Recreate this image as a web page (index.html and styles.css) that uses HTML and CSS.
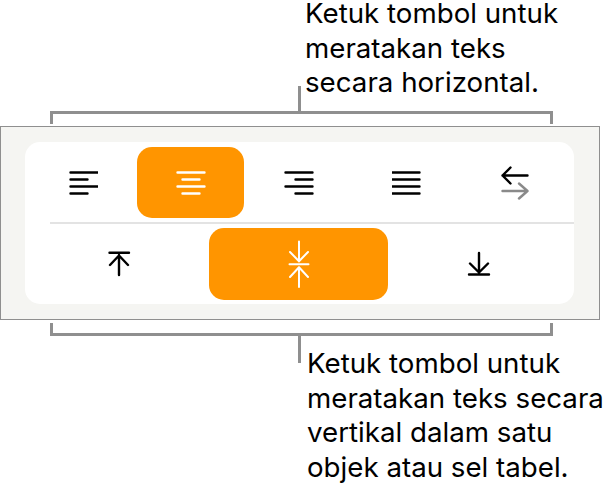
FILE: index.html
```html
<!DOCTYPE html>
<html lang="id">
<head>
<meta charset="utf-8">
<title>Perataan teks</title>
<link rel="stylesheet" href="styles.css">
</head>
<body>
<p class="note note-top">Ketuk tombol untuk<br>meratakan teks<br>secara horizontal.</p>
<div class="bracket bracket-top"></div>
<section class="panel">
  <div class="card">
    <div class="row row-h">
      <button class="btn"><svg width="30" height="24" viewBox="0 0 30 24"><path class="ic" d="M2.500 1.500H29.500M2.500 8.500H19.500M2.500 15.500H29.500M2.500 22.500H19.500"/></svg></button>
      <button class="btn on"><svg width="30" height="24" viewBox="0 0 30 24"><path class="ic" d="M1.500 1.500H28.500M6.500 8.500H23.500M1.500 15.500H28.500M6.500 22.500H23.500"/></svg></button>
      <button class="btn"><svg width="30" height="24" viewBox="0 0 30 24"><path class="ic" d="M1.500 1.500H28.500M11.500 8.500H28.500M1.500 15.500H28.500M11.500 22.500H28.500"/></svg></button>
      <button class="btn"><svg width="30" height="24" viewBox="0 0 30 24"><path class="ic" d="M0.500 1.500H27.500M0.500 8.500H27.500M0.500 15.500H27.500M0.500 22.500H27.500"/></svg></button>
      <button class="btn"><svg width="30" height="36" viewBox="0 0 30 36"><path class="ic" d="M27.500 10.500H2.500M10.500 2.500L2.500 10.500L10.500 18.500"/><path class="ic gray" d="M2.500 26H27.500M19 18.500L27.500 26L19 33.500"/></svg></button>
    </div>
    <div class="row row-v">
      <button class="btn nudge-r"><svg width="24" height="26" viewBox="0 0 24 26"><path class="ic" d="M2.500 1.700H22M12 24V4M3 14L12 4.500L21 14"/></svg></button>
      <button class="btn on"><svg width="24" height="48" viewBox="0 0 24 48"><path class="ic thin" d="M2.500 24.300H21.500M12 1.500V21.500M3 12L12 21.300L21 12M12 47V27.300M3 37L12 27.300L21 37"/></svg></button>
      <button class="btn nudge-l"><svg width="24" height="26" viewBox="0 0 24 26"><path class="ic" d="M2 23.500H22M12 2V21.500M3 12.500L12 21.500L21 12.500"/></svg></button>
    </div>
  </div>
</section>
<div class="bracket bracket-bottom"></div>
<p class="note note-bottom">Ketuk tombol untuk<br>meratakan teks secara<br>vertikal dalam satu<br>objek atau sel tabel.</p>
</body>
</html>
```
FILE: styles.css
```css
* { box-sizing: border-box; }
html, body { margin: 0; padding: 0; }
body {
  display: flow-root;
  width: 611px;
  height: 494px;
  overflow: hidden;
  background: #fff;
  color: #000;
  font-family: Inter, "Liberation Sans", Arial, sans-serif;
}
.note {
  margin: 0;
  font-size: 27.700px;
  line-height: 34.700px;
  white-space: nowrap;
}
.note-top { height: 115px; margin-top: -4px; padding-left: 305px; }
.note-bottom { height: 140px; padding-left: 307px; }
.bracket {
  position: relative;
  width: 503px;
  height: 13px;
  margin-left: 50px;
  border: 0 solid #8f8f8f;
  border-left-width: 3px;
  border-right-width: 3px;
}
.bracket::after {
  content: "";
  position: absolute;
  left: 245px;
  width: 3px;
  background: #8f8f8f;
}
.bracket-top {
  margin-bottom: 2px;
  border-top-width: 3px;
}
.bracket-top::after { top: -28px; height: 28px; }
.bracket-bottom {
  margin-top: 3px;
  margin-bottom: 10px;
  border-bottom-width: 3px;
}
.bracket-bottom::after { top: 10px; height: 30px; }
.panel {
  width: 600px;
  height: 194px;
  padding: 15px 0 0 24px;
  background: #f5f5f2;
  border: 1px solid #8f8f8f;
}
.card {
  width: 549px;
  height: 162px;
  background: #fff;
  border-radius: 15px;
  padding: 5px 0 4px;
  display: flex;
  flex-direction: column;
}
.row { display: grid; }
.row-h {
  grid-template-columns: repeat(5, 107px);
  column-gap: 1px;
  height: 71px;
  margin: 0 0 10px 4px;
  justify-content: start;
}
.row-v {
  grid-template-columns: 184px 179px 186px;
  height: 72px;
  position: relative;
}
.row-v::before {
  content: "";
  position: absolute;
  left: 25px;
  right: 0;
  top: -6px;
  height: 2px;
  background: #e3e3e3;
}
.btn {
  border: 0;
  padding: 0;
  margin: 0;
  background: none;
  border-radius: 15px;
  display: flex;
  align-items: center;
  justify-content: center;
  color: #000;
}
.btn.on { background: #ff9500; color: #fff; }
.btn.nudge-r { padding-left: 4px; }
.btn.nudge-l { padding-right: 4px; }
.ic { fill: none; stroke: currentColor; stroke-width: 2.400; stroke-linecap: round; stroke-linejoin: round; }
.ic.thin { stroke-width: 2; }
.ic.gray { stroke: #8a8a8a; }
```
